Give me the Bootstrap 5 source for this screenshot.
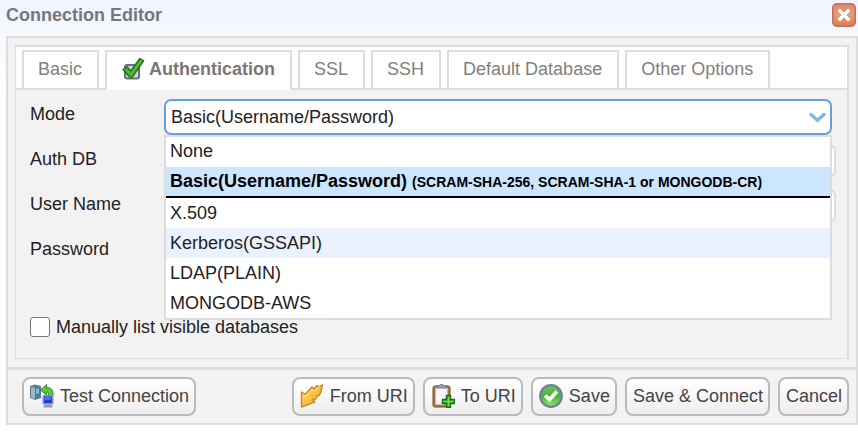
<!DOCTYPE html>
<html lang="en">
<head>
<meta charset="utf-8">
<meta name="viewport" content="width=device-width, initial-scale=1">
<title>Connection Editor</title>
<link href="https://cdn.jsdelivr.net/npm/bootstrap@5.3.0/dist/css/bootstrap.min.css" rel="stylesheet">
<style>
body{font-family:"Liberation Sans",Arial,sans-serif;font-size:18px;line-height:22px;color:#222;background:#fff}
.editor{padding:0 0 7px 6px;background:linear-gradient(#eff4ff,#fff 90px)}
.editor-title{height:36px;padding:0 2px 6px 0}
.editor-title h1{font-size:18px;line-height:22px;color:#777}
.close-btn{width:24px;height:24px}
.editor-body{background:#f2f2f2;border:2px solid #ddd;border-bottom-width:3px;padding:7px 7px 8px}
.editor-foot{background:#f3f3f3;border:2px solid #ddd;border-top:0;padding:7px 7px 7px 14px}
.tab-panel{border:1px solid #ddd;border-width:2px 2px 1px 1px}
.tab-strip{background:#fff;padding:3px 6px 0;border-bottom:2px solid #ddd;gap:6px}
.tab-strip .nav-link{border:2px solid #ddd;border-bottom:0;border-radius:0;margin:0;height:38px;padding:0 15px 2px 14px;color:#808080;background:#fff}
.tab-strip .nav-link.active{height:40px;margin-bottom:-2px;padding-bottom:4px;color:#777;background:#fff;border-color:#ddd}
.form-area{padding:9px 11px 20px 14px}
.field-row{display:grid;grid-template-columns:134px 1fr;min-height:45px}
.field-row > label{padding-top:4px}
.mode-row{padding-right:4px}
.plain-box{height:34px;border:2px solid #ddd;border-radius:7px}
.narrow-box{width:90%}
.mode-select{appearance:none;height:36px;border:2px solid #6a9ddf;border-radius:7px;padding:0 36px 0 5px;font-size:18px;line-height:22px;color:#222;background:#fff}
.mode-arrow{position:absolute;right:6px;top:13px;pointer-events:none}
.mode-list{position:absolute;top:36px;left:0;right:0;z-index:5;background:#fff;border:2px solid #ddd}
.mode-list li{height:30px;line-height:28px;padding-left:4px;white-space:nowrap}
.mode-list .chosen{height:31px;background:#cce6ff;border-bottom:2px solid #000;font-weight:700;color:#000}
.mode-list .chosen span{font-size:14px}
.mode-list .chosen ~ li{line-height:30px}
.mode-list .hovered{background:#eaf1ff}
.list-check{margin-top:37px;gap:6px}
.list-check .form-check-input{width:20px;height:20px;margin:0;border:1px solid #767676;border-radius:3px}
.tool-btn{height:39px;border:2px solid #bbb;border-radius:8px;background:linear-gradient(#fff,#eee);padding:0 5px 2px 6px;font-size:18px;line-height:22px;color:#444;gap:6px;white-space:nowrap}
.foot-actions{gap:8px}
</style>
<script src="https://cdn.jsdelivr.net/npm/bootstrap@5.3.0/dist/js/bootstrap.bundle.min.js"></script>
</head>
<body>
<main class="editor">
  <header class="editor-title d-flex justify-content-between align-items-center">
    <h1 class="fw-bold m-0">Connection Editor</h1>
    <button type="button" class="close-btn btn p-0 border-0 d-flex" aria-label="Close">
      <svg width="24" height="24" viewBox="0 0 24 24"><defs><linearGradient id="cl" x2="0" y2="1"><stop stop-color="#e08463"/><stop offset=".5" stop-color="#f09c72"/><stop offset="1" stop-color="#df7a52"/></linearGradient></defs><rect x=".8" y=".8" width="22.4" height="22.4" rx="4" fill="url(#cl)" stroke="#bd7562" stroke-width="1.6"/><path d="M8 8l8 8M16 8l-8 8" stroke="#cf7d5e" stroke-width="5" stroke-linecap="square"/><path d="M8 8l8 8M16 8l-8 8" stroke="#fff" stroke-width="3.8" stroke-linecap="square"/></svg>
    </button>
  </header>
  <section class="editor-body">
    <div class="tab-panel">
      <nav class="tab-strip nav" role="tablist">
        <button type="button" class="nav-link" role="tab">Basic</button>
        <button type="button" class="nav-link active fw-bold d-flex align-items-center gap-1" role="tab" aria-selected="true">
          <svg width="24" height="24" viewBox="0 0 24 24" aria-hidden="true"><rect x="4" y="8" width="14" height="13.500" rx="2" fill="#cbd5e3" stroke="#637084" stroke-width="2"/><path d="M2 12.500l4-2.800 3.800 4.200L18.800 1.500l4 2.200L11 20.600H9z" fill="#3faf24" stroke="#2a6a20" stroke-width="1.300" stroke-linejoin="round"/><path d="M4.500 12.200l5.400 4.800L20.500 3.300" fill="none" stroke="#63c73f" stroke-width="1"/></svg>
          Authentication</button>
        <button type="button" class="nav-link" role="tab">SSL</button>
        <button type="button" class="nav-link" role="tab">SSH</button>
        <button type="button" class="nav-link" role="tab">Default Database</button>
        <button type="button" class="nav-link" role="tab">Other Options</button>
      </nav>
      <form class="form-area">
        <div class="field-row mode-row">
          <label for="mode">Mode</label>
          <div class="position-relative">
            <select id="mode" class="mode-select w-100"><option>Basic(Username/Password)</option></select>
            <svg class="mode-arrow" width="17" height="12" viewBox="0 0 17 12" aria-hidden="true"><path d="M2 2.500l6.500 5.800 6.500-5.800" fill="none" stroke="#74bdf0" stroke-width="3.400" stroke-linecap="round"/></svg>
            <ul class="mode-list list-unstyled m-0" role="listbox" aria-label="Mode">
              <li role="option">None</li>
              <li role="option" class="chosen" aria-selected="true">Basic(Username/Password) <span>(SCRAM-SHA-256, SCRAM-SHA-1 or MONGODB-CR)</span></li>
              <li role="option">X.509</li>
              <li role="option" class="hovered">Kerberos(GSSAPI)</li>
              <li role="option">LDAP(PLAIN)</li>
              <li role="option">MONGODB-AWS</li>
            </ul>
          </div>
        </div>
        <div class="field-row"><label for="db">Auth DB</label><input id="db" type="text" class="plain-box w-100"></div>
        <div class="field-row"><label for="user">User Name</label><input id="user" type="text" class="plain-box w-100"></div>
        <div class="field-row"><label for="pw">Password</label><input id="pw" type="password" class="plain-box narrow-box"></div>
        <div class="list-check d-flex align-items-center">
          <input class="form-check-input" type="checkbox" id="manual"><label for="manual">Manually list visible databases</label>
        </div>
      </form>
    </div>
  </section>
  <footer class="editor-foot d-flex justify-content-between">
    <button type="button" class="tool-btn d-flex align-items-center">
      <svg width="24" height="24" viewBox="0 0 24 24" aria-hidden="true"><path d="M0 2l5-1.500L11 2v12l-6 2-5-2z" fill="#627c91"/><path d="M1 3l4 1v11l-4-1z" fill="#a3b4c1"/><path d="M5 4l5-1v10l-5 2z" fill="#3f83b5"/><path d="M6 5l3-.6v5L6 10z" fill="#75bae3"/><path d="M10.500 6l6-5.500v3c5 0 7 3 6.500 8h-4.500c.5-3-.5-3.500-2-3.500v3z" fill="#5cc63c" stroke="#2d8020" stroke-width=".9"/><rect x="12.500" y="11" width="11" height="9.500" rx="1" fill="#8296bd"/><rect x="14" y="12.500" width="8" height="6.500" fill="#173cdd"/><path d="M14.500 13h7v2.500l-7 1z" fill="#4a72ee"/><path d="M14 20.500h8l.5 3h-9z" fill="#9599a1"/></svg>
      Test Connection</button>
    <div class="foot-actions d-flex">
      <button type="button" class="tool-btn d-flex align-items-center">
        <svg width="24" height="24" viewBox="0 0 24 24" aria-hidden="true"><defs><linearGradient id="go" x2="1" y2="1"><stop stop-color="#ffe06b"/><stop offset="1" stop-color="#f0a21d"/></linearGradient></defs><path d="M1.500 8l3.500 2.500 7-7.500 2 2 3-3.500 1.500 1.500L22.500.8 20.500 9l-1.500 2.500-2 .5-1 2.500-3.500 1.500 2.500 1.800L1.500 23z" fill="url(#go)" stroke="#c58a28" stroke-width="1.400" stroke-linejoin="round"/><path d="M3 10.500l2.500 2L12 5.500l2 1.500 6-4.500" fill="none" stroke="#ffeaa0"/></svg>
        From URI</button>
      <button type="button" class="tool-btn d-flex align-items-center">
        <svg width="24" height="24" viewBox="0 0 24 24" aria-hidden="true"><rect x="2" y="2" width="17" height="21" rx="2" fill="#a9783c" stroke="#765127"/><path d="M4.500 3.500h12v17h-12z" fill="#f5f7fb"/><path d="M7 20.500l9.500-11v11z" fill="#dbe1ed"/><path d="M5 4V2l3-.3C8 .2 13 .2 13 1.700l3 .3v2z" fill="#9ba6b2" stroke="#596675" stroke-width=".8"/><path d="M15.500 11.500h4v4h4v4h-4v4h-4v-4h-4v-4h4z" fill="#3fbd28" stroke="#176d14" stroke-width="1.300"/><path d="M17.500 13v9M13 17.500h9" stroke="#75de56"/></svg>
        To URI</button>
      <button type="button" class="tool-btn d-flex align-items-center">
        <svg width="24" height="24" viewBox="0 0 24 24" aria-hidden="true"><defs><linearGradient id="ok" x2="0" y2="1"><stop stop-color="#74c46a"/><stop offset=".5" stop-color="#43b534"/><stop offset="1" stop-color="#8bed63"/></linearGradient></defs><circle cx="12" cy="12" r="10.800" fill="url(#ok)" stroke="#718292" stroke-width="2.200"/><path d="M6.200 11.500l4.300 4.300 7.300-8.300" fill="none" stroke="#fff" stroke-width="3.600"/></svg>
        Save</button>
      <button type="button" class="tool-btn">Save &amp; Connect</button>
      <button type="button" class="tool-btn">Cancel</button>
    </div>
  </footer>
</main>
</body>
</html>
